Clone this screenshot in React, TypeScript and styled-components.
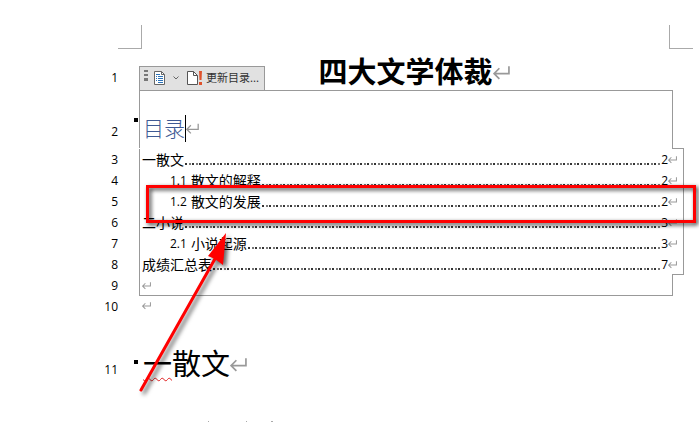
import React from "react";
import styled, { createGlobalStyle } from "styled-components";

const Global = createGlobalStyle`
  * { box-sizing: border-box; }
  body { margin: 0; background: #fff; color: #000; }
`;

const line = "#999";

const Page = styled.main`
  position: relative;
  padding-top: 25px;
  font-family: "Open Sans", "Noto Sans CJK SC", sans-serif;
  font-size: 12px;
`;

const Margins = styled.div`
  display: flex;
  justify-content: space-between;
  padding: 0 6px 0 118px;
`;

const Corner = styled.span<{ $side: "left" | "right" }>`
  width: 24px;
  height: 24px;
  border-bottom: 1px solid #aaa;
  border-${(p) => (p.$side === "left" ? "right" : "left")}: 1px solid #aaa;
`;

const Row = styled.div<{ $height: number }>`
  display: grid;
  grid-template-columns: 118px 21px minmax(0, 1fr);
  height: ${(p) => p.$height}px;
`;

const LineNumber = styled.span<{ $top?: number }>`
  padding-top: ${(p) => p.$top ?? 0}px;
  text-align: right;
  line-height: 21px;
`;

const Marker = styled.span<{ $top?: number }>`
  justify-self: end;
  width: 4px;
  height: 4px;
  margin: ${(p) => p.$top ?? 0}px 1px 0 0;
  background: ${(p) => (p.$top === undefined ? "transparent" : "#000")};
`;

const TitleCell = styled.div`
  display: flex;
  align-items: flex-end;
  justify-content: space-between;
`;

const Title = styled.h1`
  display: flex;
  flex: 1;
  align-items: center;
  justify-content: center;
  margin: 0;
  padding-right: 136px;
  font-size: 29px;
  font-weight: 700;
  line-height: 36px;
`;

const Toolbar = styled.div`
  display: flex;
  align-items: center;
  width: 126px;
  height: 24px;
  padding-left: 3px;
  border: 1px solid ${line};
  border-bottom: 0;
  background: #e1e1e1;
`;

const ToolButton = styled.button`
  display: flex;
  align-items: center;
  padding: 0;
  border: 0;
  background: none;
  color: #333;
  font: 11px/15px "Noto Sans CJK SC", sans-serif;
  white-space: nowrap;
`;

const HeadCell = styled.div`
  margin-right: 26px;
  padding: 23px 0 0 3px;
  border: 1px solid ${line};
  border-bottom: 0;
`;

const TocHeading = styled.h2`
  display: flex;
  align-items: center;
  margin: 0;
  color: #3f5a94;
  font-size: 21px;
  font-weight: 300;
  line-height: 28px;
`;

const Caret = styled.span`
  width: 1px;
  height: 27px;
  background: #000;
`;

const Entries = styled.div`
  position: relative;
  padding-top: 1px;

  &::before,
  &::after {
    content: "";
    position: absolute;
    right: 15px;
    width: 12px;
    height: 1px;
    background: ${line};
  }
  &::before { top: 0; }
  &::after { bottom: 0; }
`;

const Entry = styled.a<{ $indent: boolean }>`
  display: flex;
  align-items: center;
  margin-right: 15px;
  padding: 0 6px 0 ${(p) => (p.$indent ? 30 : 2)}px;
  border: 0 solid ${line};
  border-width: 0 1px;
  color: #000;
  line-height: 21px;
  text-decoration: none;
`;

const EntryTitle = styled.span`
  flex: none;
  font-size: 14px;
  font-weight: 400;
  line-height: 20px;
`;

const EntryIndex = styled.span`
  flex: none;
  padding-right: 4px;
`;

const Leader = styled.span`
  flex: 1;
  height: 2px;
  margin: 8px 0 0 1px;
  background: repeating-linear-gradient(
    to right,
    #333 0 2px,
    transparent 2px 4px,
    #777 4px 6px,
    transparent 6px 7px
  );
`;

const TailCell = styled.div`
  display: flex;
  align-items: center;
  margin-right: 26px;
  padding-left: 2px;
  border: 1px solid ${line};
  border-top: 0;
`;

const PlainCell = styled.div`
  display: flex;
  align-items: center;
  padding: 0 0 2px 3px;
`;

const Section = styled.h2`
  display: flex;
  align-items: center;
  align-self: start;
  margin: 0;
  padding: 30px 0 0 4px;
  font-size: 29px;
  font-weight: 400;
  line-height: 38px;
`;

const Misspelled = styled.span`
  text-decoration: underline wavy #e02020 1px;
  text-underline-offset: 2px;
`;

const Highlight = styled.div`
  position: absolute;
  top: 185px;
  right: 3px;
  left: 146px;
  height: 38px;
  border: 3px solid #f00;
  filter: drop-shadow(2px 2px 2px rgba(0, 0, 0, 0.8));
  pointer-events: none;
`;

const Arrow = styled.svg`
  position: absolute;
  top: 225px;
  left: 130px;
  filter: drop-shadow(3px 3px 2px rgba(0, 0, 0, 0.6));
  pointer-events: none;
`;

const NextLine = styled.svg`
  display: block;
  margin: 6px 0 0 206px;
`;

const Return = ({ size = 9 }: { size?: number }) => (
  <svg width={size} height={size} viewBox="0 0 16 16" fill="none" stroke="#999" strokeWidth={size > 10 ? 1.6 : 1.8} aria-hidden="true">
    <path d="M15 2v7H1M6 4 1 9l5 5" />
  </svg>
);

const DocumentIcon = () => (
  <svg width="12" height="15" viewBox="0 0 12 15" fill="none" aria-hidden="true">
    <path d="M.5.5h7l3 3v10H.5z" fill="#fff" stroke="#666" />
    <path d="M7.5.5v3h3" stroke="#666" />
    <path d="M2 3.500h4M2 5.500h1M4 5.500h5M2 7.500h1M4 7.500h5M2 9.500h1M4 9.500h5M4 11.500h5" stroke="#2b72b8" />
  </svg>
);

const UpdateIcon = () => (
  <svg width="15" height="15" viewBox="0 0 15 15" fill="none" aria-hidden="true">
    <path d="M.5.5h6l4 4v9H.5z" fill="#fff" stroke="#555" />
    <path d="M6.500.5v4h4" stroke="#555" />
    <path d="M12 0h3l-.5 9h-2z" fill="#e0522c" />
    <path d="M12 11h3v3h-3z" fill="#e0522c" />
  </svg>
);

const Grip = styled.svg`
  align-self: flex-start;
  margin: 2px 6px 0 1px;
`;

const Chevron = styled.svg`
  margin: 0 8px 0 7px;
`;

const UpdateText = styled.span`
  padding: 0 0 2px 4px;
`;

const entries = [
  { title: "一散文", page: 2 },
  { index: "1.1", title: "散文的解释", page: 2 },
  { index: "1.2", title: "散文的发展", page: 2 },
  { title: "二小说", page: 3 },
  { index: "2.1", title: "小说起源", page: 3 },
  { title: "成绩汇总表", page: 7 },
];

export default function App() {
  return (
    <Page>
      <Global />
      <Margins>
        <Corner $side="left" />
        <Corner $side="right" />
      </Margins>
      <Row $height={41}>
        <LineNumber $top={18}>1</LineNumber>
        <Marker />
        <TitleCell>
          <Toolbar>
            <Grip width="4" height="14" aria-hidden="true">
              <path d="M0 1h4v2H0zM0 5h4v2H0zM0 9h4v3H0z" fill="#777" />
            </Grip>
            <ToolButton aria-label="目录">
              <DocumentIcon />
              <Chevron width="6" height="5" fill="none" stroke="#666" aria-hidden="true">
                <path d="m.5.5 2.500 2.500L5.500.5" />
              </Chevron>
            </ToolButton>
            <ToolButton>
              <UpdateIcon />
              <UpdateText>更新目录...</UpdateText>
            </ToolButton>
          </Toolbar>
          <Title>四大文学体裁<Return size={17} /></Title>
        </TitleCell>
      </Row>
      <Row $height={58}>
        <LineNumber $top={31}>2</LineNumber>
        <Marker $top={28} />
        <HeadCell>
          <TocHeading>目录<Caret /><Return size={13} /></TocHeading>
        </HeadCell>
      </Row>
      <Entries>
        {entries.map((e, i) => (
          <Row $height={21} key={e.title}>
            <LineNumber>{i + 3}</LineNumber>
            <Marker />
            <Entry href="#" $indent={!!e.index}>
              {e.index && <EntryIndex>{e.index}</EntryIndex>}
              <EntryTitle>{e.title}</EntryTitle>
              <Leader aria-hidden="true" />
              <span>{e.page}</span>
              <Return />
            </Entry>
          </Row>
        ))}
      </Entries>
      <Row $height={21}>
        <LineNumber>9</LineNumber>
        <Marker />
        <TailCell><Return /></TailCell>
      </Row>
      <Row $height={19}>
        <LineNumber>10</LineNumber>
        <Marker />
        <PlainCell><Return /></PlainCell>
      </Row>
      <Row $height={100}>
        <LineNumber $top={44}>11</LineNumber>
        <Marker $top={45} />
        <Section><Misspelled>一</Misspelled>散文<Return size={17} /></Section>
      </Row>
      <NextLine width="70" height="1" aria-hidden="true">
        <path d="M2 0h1v1H2zM40 0h1v1h-1zM65 0h2v1h-2z" fill="#aaa" />
      </NextLine>
      <Highlight />
      <Arrow width="110" height="180" aria-hidden="true">
        <path d="M11 165 86 32" stroke="#f00" strokeWidth="3" strokeLinecap="round" />
        <path d="M96 8 78 31l7 3 8 6z" fill="#f00" />
      </Arrow>
    </Page>
  );
}
